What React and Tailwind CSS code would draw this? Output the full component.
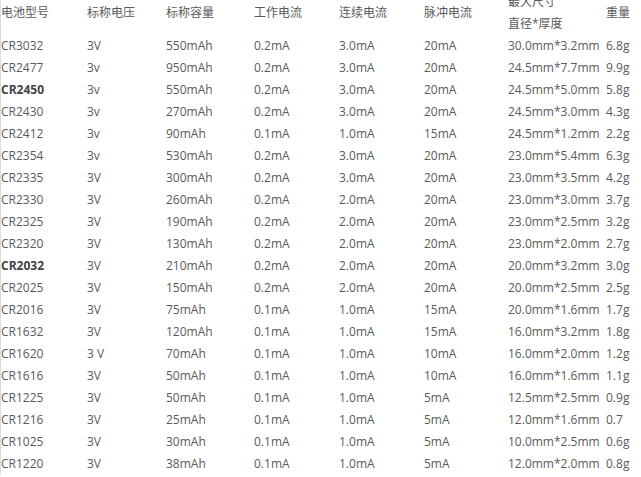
const ROWS = [
  ['CR3032', '3V', '550mAh', '0.2mA', '3.0mA', '20mA', '30.0mm*3.2mm', '6.8g'],
  ['CR2477', '3v', '950mAh', '0.2mA', '3.0mA', '20mA', '24.5mm*7.7mm', '9.9g'],
  ['CR2450', '3v', '550mAh', '0.2mA', '3.0mA', '20mA', '24.5mm*5.0mm', '5.8g', true],
  ['CR2430', '3v', '270mAh', '0.2mA', '3.0mA', '20mA', '24.5mm*3.0mm', '4.3g'],
  ['CR2412', '3v', '90mAh', '0.1mA', '1.0mA', '15mA', '24.5mm*1.2mm', '2.2g'],
  ['CR2354', '3v', '530mAh', '0.2mA', '3.0mA', '20mA', '23.0mm*5.4mm', '6.3g'],
  ['CR2335', '3V', '300mAh', '0.2mA', '3.0mA', '20mA', '23.0mm*3.5mm', '4.2g'],
  ['CR2330', '3V', '260mAh', '0.2mA', '2.0mA', '20mA', '23.0mm*3.0mm', '3.7g'],
  ['CR2325', '3V', '190mAh', '0.2mA', '2.0mA', '20mA', '23.0mm*2.5mm', '3.2g'],
  ['CR2320', '3V', '130mAh', '0.2mA', '2.0mA', '20mA', '23.0mm*2.0mm', '2.7g'],
  ['CR2032', '3V', '210mAh', '0.2mA', '2.0mA', '20mA', '20.0mm*3.2mm', '3.0g', true],
  ['CR2025', '3V', '150mAh', '0.2mA', '2.0mA', '20mA', '20.0mm*2.5mm', '2.5g'],
  ['CR2016', '3V', '75mAh', '0.1mA', '1.0mA', '15mA', '20.0mm*1.6mm', '1.7g'],
  ['CR1632', '3V', '120mAh', '0.1mA', '1.0mA', '15mA', '16.0mm*3.2mm', '1.8g'],
  ['CR1620', '3 V', '70mAh', '0.1mA', '1.0mA', '10mA', '16.0mm*2.0mm', '1.2g'],
  ['CR1616', '3V', '50mAh', '0.1mA', '1.0mA', '10mA', '16.0mm*1.6mm', '1.1g'],
  ['CR1225', '3V', '50mAh', '0.1mA', '1.0mA', '5mA', '12.5mm*2.5mm', '0.9g'],
  ['CR1216', '3V', '25mAh', '0.1mA', '1.0mA', '5mA', '12.0mm*1.6mm', '0.7'],
  ['CR1025', '3V', '30mAh', '0.1mA', '1.0mA', '5mA', '10.0mm*2.5mm', '0.6g'],
  ['CR1220', '3V', '38mAh', '0.1mA', '1.0mA', '5mA', '12.0mm*2.0mm', '0.8g'],
];

const HEAD = ['电池型号', '标称电压', '标称容量', '工作电流', '连续电流', '脉冲电流', null, '重量'];
const WIDTHS = ['w-[86px]', 'w-[79px]', 'w-[88px]', 'w-[85px]', 'w-[85px]', 'w-[84px]', 'w-[98px]', 'w-[35px]'];

export default function App() {
  return (
    <div className="w-[641px] h-[477px] overflow-hidden bg-white">
      <div className="border-l border-[#dcdcdc] mt-[-9px]">
        <table
          className="w-[640px] table-fixed border-collapse text-[12px] text-[#5a5a5a] whitespace-nowrap"
          style={{ fontFamily: '"Open Sans", "Noto Sans CJK SC", sans-serif' }}
        >
          <colgroup>
            {WIDTHS.map((w, i) => <col key={i} className={w} />)}
          </colgroup>
          <thead>
            <tr className="h-[44px]">
              {HEAD.map((h, i) => (
                <th key={i} className="p-0 text-left font-normal align-middle leading-[22px]">
                  {h ?? (<><div>最大尺寸</div><div>直径*厚度</div></>)}
                </th>
              ))}
            </tr>
          </thead>
          <tbody>
            {ROWS.map((r) => (
              <tr key={r[0]} className="h-[22px]">
                {r.slice(0, 8).map((c, i) => (
                  <td
                    key={i}
                    className={`p-0 leading-[22px] ${i === 0 && r[8] ? 'font-bold text-[#444]' : ''}`}
                  >
                    {c}
                  </td>
                ))}
              </tr>
            ))}
          </tbody>
        </table>
      </div>
    </div>
  );
}
